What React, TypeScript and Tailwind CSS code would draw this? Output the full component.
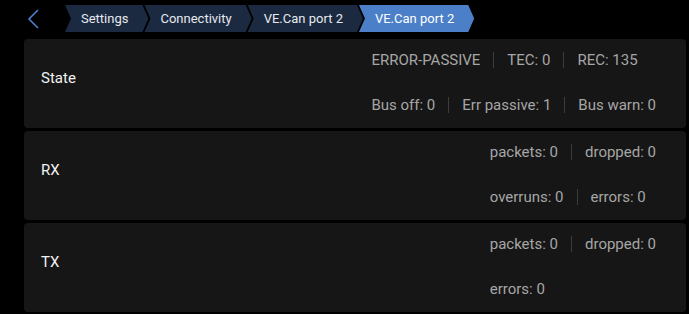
import React from "react";

const crumbs = ["Settings", "Connectivity", "VE.Can port 2", "VE.Can port 2"];

const rows: { label: string; lines: string[][] }[] = [
  {
    label: "State",
    lines: [
      ["ERROR-PASSIVE", "TEC: 0", "REC: 135"],
      ["Bus off: 0", "Err passive: 1", "Bus warn: 0"],
    ],
  },
  {
    label: "RX",
    lines: [
      ["packets: 0", "dropped: 0"],
      ["overruns: 0", "errors: 0"],
    ],
  },
  {
    label: "TX",
    lines: [["packets: 0", "dropped: 0"], ["errors: 0"]],
  },
];

const BackIcon = () => (
  <svg width="14" height="20" viewBox="0 0 14 20" fill="none">
    <polyline
      points="11,1 2,10 11,19"
      stroke="#4a80cc"
      strokeWidth="1.6"
      strokeLinejoin="miter"
    />
  </svg>
);

const Crumb = ({ text, active, first }: { text: string; active: boolean; first: boolean }) => (
  <div
    className={`flex h-[27px] items-center pl-[16px] pr-[20px] text-[13px] [clip-path:polygon(0_0,calc(100%-6px)_0,100%_50%,calc(100%-6px)_100%,0_100%,6px_50%)] ${
      active ? "bg-[#4b80c9] text-white" : "bg-[#1b2a40] text-[#e6e9ee]"
    } ${first ? "" : "-ml-[4px]"}`}
  >
    {text}
  </div>
);

export default function App() {
  return (
    <div className="h-[314px] w-[689px] overflow-hidden bg-black font-['Roboto',sans-serif]">
      <div className="flex h-[39px] items-start pt-[5px]">
        <div className="ml-[27px] mt-[4px] w-[38px]">
          <BackIcon />
        </div>
        <div className="flex">
          {crumbs.map((c, i) => (
            <Crumb key={i} text={c} active={i === crumbs.length - 1} first={i === 0} />
          ))}
        </div>
      </div>
      <div className="ml-[24px] mr-[3px] flex flex-col gap-[3px]">
        {rows.map((r) => (
          <div key={r.label} className="flex h-[89px] rounded-[4px] bg-[#161616] pl-[17px] pr-[30px]">
            <div className="mt-[29px] text-[15px] leading-[20px] text-[#f2f2f2]">{r.label}</div>
            <div className="ml-auto flex flex-col gap-[25px] pt-[11px]">
              {r.lines.map((line, li) => (
                <div key={li} className="flex items-center text-[15px] leading-[20px] text-[#a6a6a6]">
                  {line.map((v, vi) => (
                    <React.Fragment key={vi}>
                      {vi > 0 && <div className="mx-[13px] h-[16px] w-px bg-[#3c3c3c]" />}
                      <span>{v}</span>
                    </React.Fragment>
                  ))}
                </div>
              ))}
            </div>
          </div>
        ))}
      </div>
    </div>
  );
}
